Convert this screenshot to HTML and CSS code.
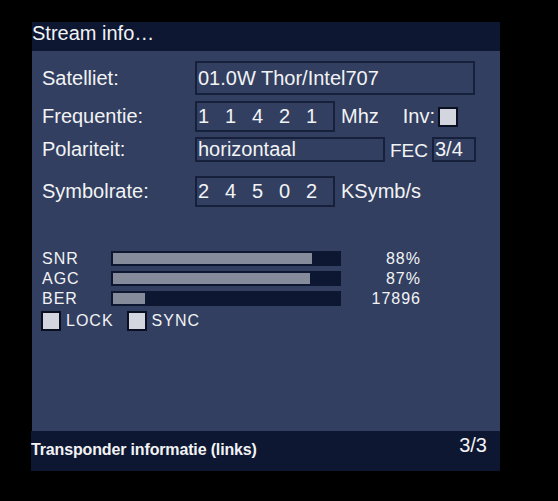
FILE: index.html
```html
<!DOCTYPE html>
<html lang="nl">
<head>
  <meta charset="UTF-8">
  <meta name="viewport" content="width=device-width, initial-scale=1.0">
  <title>Stream info</title>
  <link rel="stylesheet" href="styles.css">
</head>
<body>
  <div class="panel">
    <div class="titlebar">Stream info…</div>

    <main class="content">
      <div class="row row-sat">
        <span class="label">Satelliet:</span>
        <div class="field field-wide">01.0W Thor/Intel707</div>
      </div>

      <div class="row row-freq">
        <span class="label">Frequentie:</span>
        <div class="field field-digits"><span>1</span><span>1</span><span>4</span><span>2</span><span>1</span></div>
        <span class="unit">Mhz</span>
        <span class="inv">Inv:</span>
        <span class="check"></span>
      </div>

      <div class="row row-pol">
        <span class="label">Polariteit:</span>
        <div class="field field-pol">horizontaal</div>
        <span class="fec">FEC</span>
        <div class="field field-fec">3/4</div>
      </div>

      <div class="row row-sym">
        <span class="label">Symbolrate:</span>
        <div class="field field-digits"><span>2</span><span>4</span><span>5</span><span>0</span><span>2</span></div>
        <span class="unit">KSymb/s</span>
      </div>

      <div class="signal">
        <div class="meter">
          <span class="meter-name">SNR</span>
          <div class="bar"><div class="bar-fill" style="width:88%"></div></div>
          <span class="meter-value">88%</span>
        </div>
        <div class="meter">
          <span class="meter-name">AGC</span>
          <div class="bar"><div class="bar-fill" style="width:87%"></div></div>
          <span class="meter-value">87%</span>
        </div>
        <div class="meter">
          <span class="meter-name">BER</span>
          <div class="bar"><div class="bar-fill" style="width:14%"></div></div>
          <span class="meter-value">17896</span>
        </div>
        <div class="status">
          <span class="check"></span>
          <span class="status-text">LOCK</span>
          <span class="check check-sync"></span>
          <span class="status-text">SYNC</span>
        </div>
      </div>
    </main>

    <footer class="footer">
      <span class="footer-info">Transponder informatie (links)</span>
      <span class="footer-page">3/3</span>
    </footer>
  </div>
</body>
</html>
```

FILE: styles.css
```css
body {
  background: #000;
  color: #f2f3f5;
  font-family: "Liberation Sans", Arial, sans-serif;
  margin: 0;
  padding: 0;
}
.panel {
  width: 468px;
  margin: 22px 0 0 32px;
  display: flex;
  flex-direction: column;
}
.titlebar {
  background: #0e1731;
  height: 29px;
  font-size: 20px;
  line-height: 22px;
}
.content {
  background: #323f60;
  height: 380px;
  box-sizing: border-box;
  padding: 10px 0 0 10px;
}
.row {
  display: flex;
  align-items: center;
  font-size: 20px;
  line-height: 23px;
}
.row-sat {
  height: 34px;
}
.row-freq {
  height: 31px;
  margin-top: 6px;
}
.row-pol {
  height: 25px;
  margin-top: 5px;
}
.row-sym {
  height: 31px;
  margin-top: 14px;
}
.label {
  width: 153px;
  flex-shrink: 0;
}
.field {
  height: 100%;
  box-sizing: border-box;
  border: 2px solid #17203b;
  padding-left: 1px;
  display: flex;
  align-items: center;
}
.field-wide {
  width: 280px;
}
.field-digits {
  width: 140px;
}
.field-digits span {
  width: 27.5px;
}
.field-pol {
  width: 190px;
}
.field-fec {
  width: 44px;
  margin-left: 4px;
}
.unit {
  margin-left: 6px;
}
.inv {
  margin-left: 24px;
}
.check {
  width: 20px;
  height: 20px;
  box-sizing: border-box;
  border: 2px solid #0a1022;
  background: #d3d6de;
  flex-shrink: 0;
}
.row .check {
  margin-left: 3px;
}
.fec {
  font-size: 19px;
  margin-left: 5px;
  align-self: flex-end;
  line-height: 22px;
}
.signal {
  margin-top: 44px;
  font-size: 16px;
  letter-spacing: 1px;
}
.meter {
  display: flex;
  align-items: center;
  height: 15px;
  line-height: 15px;
  margin-bottom: 5px;
}
.meter-name {
  width: 69px;
}
.bar {
  width: 230px;
  height: 15px;
  box-sizing: border-box;
  padding: 2px;
  background: #0e1731;
}
.bar-fill {
  height: 100%;
  background: #868b9b;
}
.meter-value {
  width: 80px;
  text-align: right;
}
.status {
  display: flex;
  align-items: center;
  margin-left: -1px;
}
.status-text {
  margin-left: 5px;
}
.check-sync {
  margin-left: 13px;
}
.footer {
  background: #0e1731;
  height: 40px;
  margin-left: -1px;
  display: flex;
  justify-content: space-between;
  align-items: flex-start;
  padding-right: 13px;
}
.footer-info {
  font-size: 16px;
  font-weight: bold;
  line-height: 18px;
  margin-top: 10px;
  letter-spacing: -0.15px;
}
.footer-page {
  font-size: 20px;
  line-height: 22px;
  margin-top: 3px;
}
```
